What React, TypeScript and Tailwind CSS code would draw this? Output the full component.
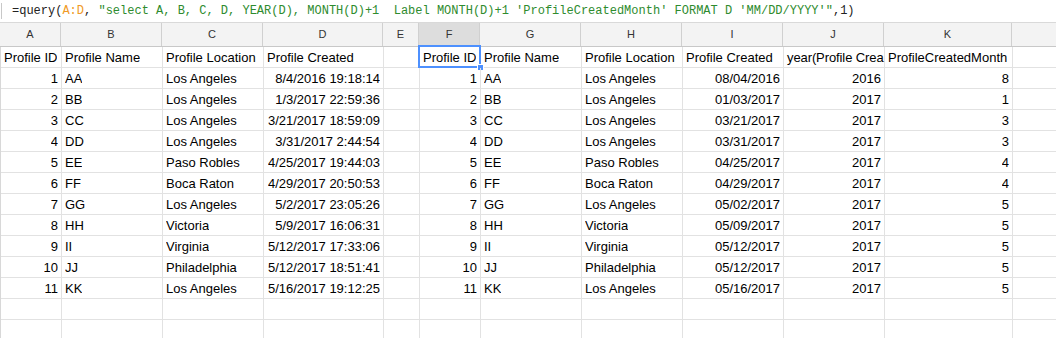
import React from "react";

const widths = [61, 101, 101, 120, 36, 61, 101, 101, 101, 101, 128];
const letters = ["A", "B", "C", "D", "E", "F", "G", "H", "I", "J", "K"];

const raw: [number, string, string, string][] = [
  [1, "AA", "Los Angeles", "8/4/2016 19:18:14"],
  [2, "BB", "Los Angeles", "1/3/2017 22:59:36"],
  [3, "CC", "Los Angeles", "3/21/2017 18:59:09"],
  [4, "DD", "Los Angeles", "3/31/2017 2:44:54"],
  [5, "EE", "Paso Robles", "4/25/2017 19:44:03"],
  [6, "FF", "Boca Raton", "4/29/2017 20:50:53"],
  [7, "GG", "Los Angeles", "5/2/2017 23:05:26"],
  [8, "HH", "Victoria", "5/9/2017 16:06:31"],
  [9, "II", "Virginia", "5/12/2017 17:33:06"],
  [10, "JJ", "Philadelphia", "5/12/2017 18:51:41"],
  [11, "KK", "Los Angeles", "5/16/2017 19:12:25"],
];

type Cell = { t: string; r?: boolean; tight?: boolean };

function fmt(d: string) {
  const [date] = d.split(" ");
  const [m, dd, y] = date.split("/");
  return { s: `${m.padStart(2, "0")}/${dd.padStart(2, "0")}/${y}`, y, m: String(Number(m)) };
}

const header: Cell[] = [
  { t: "Profile ID" },
  { t: "Profile Name" },
  { t: "Profile Location" },
  { t: "Profile Created" },
  { t: "" },
  { t: "Profile ID" },
  { t: "Profile Name" },
  { t: "Profile Location" },
  { t: "Profile Created" },
  { t: "year(Profile Crea", tight: true },
  { t: "ProfileCreatedMonth" },
];

const rows: Cell[][] = raw.map(([id, n, loc, d]) => {
  const f = fmt(d);
  return [
    { t: String(id), r: true },
    { t: n },
    { t: loc },
    { t: d, r: true },
    { t: "" },
    { t: String(id), r: true },
    { t: n },
    { t: loc },
    { t: f.s, r: true },
    { t: f.y, r: true },
    { t: f.m, r: true },
  ];
});

function Row({ cells, first }: { cells: Cell[]; first?: boolean }) {
  return (
    <div className="flex h-[21px] border-b border-[#e2e2e2]">
      {widths.map((w, i) => {
        const c = cells[i];
        const sel = first && i === 5;
        const tight = c && c.tight;
        return (
          <div
            key={i}
            style={{ width: w }}
            className={
              "relative shrink-0 border-r border-[#e2e2e2] h-full flex items-center overflow-visible " +
              (tight ? "pl-[3px] pr-0 " : "px-[3px] ") +
              (c && c.r ? "justify-end" : "justify-start")
            }
          >
            <span
              className={
                "whitespace-nowrap leading-[18px] pt-[2px] block " +
                (tight ? "overflow-visible tracking-[-0.1px]" : "overflow-hidden max-w-full")
              }
            >
              {c ? c.t : ""}
            </span>
            {sel && (
              <>
                <div className="absolute left-[-2px] top-[-2px] right-[-1px] bottom-[-1px] border-2 border-[#4d90fe] pointer-events-none" />
                <div className="absolute right-[-4px] bottom-[-4px] w-[7px] h-[7px] bg-[#4d90fe] border border-white" />
              </>
            )}
          </div>
        );
      })}
      <div className="flex-1 h-full" />
    </div>
  );
}

export default function App() {
  return (
    <div className="w-[1056px] h-[338px] overflow-hidden bg-white text-[13px] text-black" style={{ fontFamily: "Arial, 'Liberation Sans', sans-serif" }}>
      <div className="h-[23px] border-b border-[#d9d9d9] flex items-center pl-[12px] relative">
        <div className="absolute left-[1px] top-[3px] bottom-[3px] w-px bg-[#c8c8c8]" />
        <span className="whitespace-pre text-[12px] leading-[20px]" style={{ fontFamily: "'Liberation Mono', 'DejaVu Sans Mono', monospace" }}>
          <span className="text-[#222]">=query(</span>
          <span className="text-[#f09a26]">A:D</span>
          <span className="text-[#222]">, </span>
          <span className="text-[#2e8b2e]">"select A, B, C, D, YEAR(D), MONTH(D)+1  Label MONTH(D)+1 'ProfileCreatedMonth' FORMAT D 'MM/DD/YYYY'"</span>
          <span className="text-[#222]">,1)</span>
        </span>
      </div>
      <div className="flex h-[24px] bg-[#f3f3f3] border-b border-[#c8c8c8]">
        {widths.map((w, i) => (
          <div
            key={i}
            style={{ width: w }}
            className={
              "shrink-0 border-r border-[#d0d0d0] h-full flex items-center justify-center text-[11px] text-[#333] " +
              (i === 5 ? "bg-[#dddddd]" : "")
            }
          >
            {letters[i]}
          </div>
        ))}
        <div className="flex-1 h-full" />
      </div>
      <div className="border-l border-[#d8d8d8]">
        <Row cells={header} first />
        {rows.map((r, i) => (
          <Row key={i} cells={r} />
        ))}
        <Row cells={[]} />
        <Row cells={[]} />
      </div>
    </div>
  );
}
